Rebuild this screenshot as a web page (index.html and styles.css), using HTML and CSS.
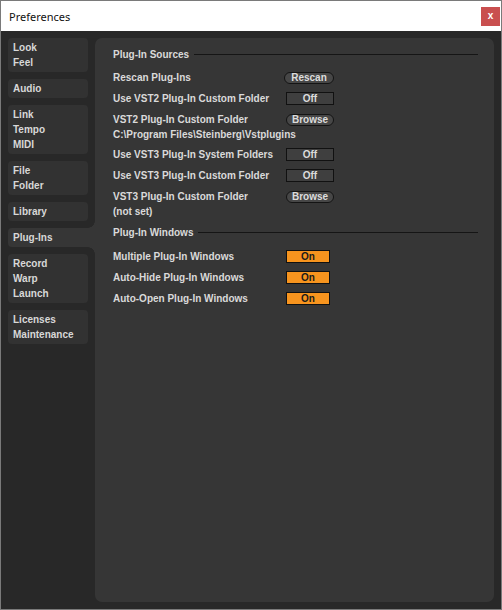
FILE: index.html
```html
<!DOCTYPE html>
<html lang="en">
<head>
    <meta charset="UTF-8">
    <title>Preferences</title>
    <link rel="stylesheet" href="styles.css">
</head>
<body>
    <div class="window">
        <div class="titlebar">
            <span class="title">Preferences</span>
            <span class="close">x</span>
        </div>

        <div class="content">
            <div class="sidebar">
                <div class="tab">Look<br>Feel</div>
                <div class="tab">Audio</div>
                <div class="tab">Link<br>Tempo<br>MIDI</div>
                <div class="tab">File<br>Folder</div>
                <div class="tab">Library</div>
                <div class="tab selected">Plug-Ins</div>
                <div class="tab">Record<br>Warp<br>Launch</div>
                <div class="tab">Licenses<br>Maintenance</div>
            </div>

            <div class="panel">
                <div class="section-head">
                    <span>Plug-In Sources</span>
                    <span class="rule"></span>
                </div>
                <div class="list">
                    <div class="row">
                        <span class="label">Rescan Plug-Ins</span>
                        <span class="control"><span class="pill wide">Rescan</span></span>
                    </div>
                    <div class="row">
                        <span class="label">Use VST2 Plug-In Custom Folder</span>
                        <span class="control"><span class="toggle">Off</span></span>
                    </div>
                    <div class="row">
                        <span class="label">VST2 Plug-In Custom Folder</span>
                        <span class="control"><span class="pill">Browse</span></span>
                    </div>
                    <div class="sub">C:\Program Files\Steinberg\Vstplugins</div>
                    <div class="row">
                        <span class="label">Use VST3 Plug-In System Folders</span>
                        <span class="control"><span class="toggle">Off</span></span>
                    </div>
                    <div class="row">
                        <span class="label">Use VST3 Plug-In Custom Folder</span>
                        <span class="control"><span class="toggle">Off</span></span>
                    </div>
                    <div class="row">
                        <span class="label">VST3 Plug-In Custom Folder</span>
                        <span class="control"><span class="pill">Browse</span></span>
                    </div>
                    <div class="sub">(not set)</div>
                </div>

                <div class="section-head second">
                    <span>Plug-In Windows</span>
                    <span class="rule"></span>
                </div>
                <div class="list windows">
                    <div class="row">
                        <span class="label">Multiple Plug-In Windows</span>
                        <span class="control"><span class="toggle on">On</span></span>
                    </div>
                    <div class="row">
                        <span class="label">Auto-Hide Plug-In Windows</span>
                        <span class="control"><span class="toggle on">On</span></span>
                    </div>
                    <div class="row">
                        <span class="label">Auto-Open Plug-In Windows</span>
                        <span class="control"><span class="toggle on">On</span></span>
                    </div>
                </div>
            </div>
        </div>
    </div>
</body>
</html>
```

FILE: styles.css
```css
html, body {
    margin: 0;
    padding: 0;
    background: #282828;
}

.window {
    width: 502px;
    height: 610px;
    box-sizing: border-box;
    border: 1px solid #7a7a7a;
    display: flex;
    flex-direction: column;
    font-family: "Liberation Sans", Arial, sans-serif;
}

.titlebar {
    height: 30px;
    flex: none;
    background: #ffffff;
    display: flex;
    align-items: center;
    padding: 0 1px 0 8px;
}

.title {
    font-family: "Noto Sans", sans-serif;
    font-size: 11px;
    color: #111;
}

.close {
    margin-left: auto;
    width: 19px;
    height: 19px;
    background: #c94f4f;
    color: #fff;
    font-weight: bold;
    font-size: 10px;
    line-height: 17px;
    text-align: center;
}

.content {
    flex: 1;
    display: flex;
    gap: 7px;
    padding: 7px;
    background: #282828;
}

/* left tabs */
.sidebar {
    width: 80px;
    flex: none;
    display: flex;
    flex-direction: column;
    gap: 7px;
}

.tab {
    background: #323232;
    border-radius: 4px;
    padding: 2px 5px;
    font-size: 10px;
    font-weight: bold;
    line-height: 15px;
    color: #d8d8d8;
}

.tab.selected {
    position: relative;
    width: 87px;
    box-sizing: border-box;
    background: #363636;
    border-radius: 4px 0 0 4px;
}

.tab.selected::before,
.tab.selected::after {
    content: "";
    position: absolute;
    left: 80px;
    width: 7px;
    height: 7px;
}

.tab.selected::before {
    top: -7px;
    background: radial-gradient(circle at 0 0, #282828 6.5px, #363636 7px);
}

.tab.selected::after {
    bottom: -7px;
    background: radial-gradient(circle at 0 100%, #282828 6.5px, #363636 7px);
}

/* main panel */
.panel {
    flex: 1;
    background: #363636;
    border-radius: 7px;
    padding: 8px 16px 0 18px;
    color: #dadada;
    font-size: 10px;
    font-weight: bold;
}

.section-head {
    height: 16px;
    display: flex;
    align-items: center;
}

.section-head.second {
    margin-top: 3px;
}

.rule {
    flex: 1;
    margin-left: 5px;
    border-top: 1px solid #151515;
}

.list {
    margin-top: 5px;
}

.list.windows {
    margin-top: 6px;
}

.row {
    height: 21px;
    display: flex;
    align-items: center;
}

.label {
    width: 171px;
}

.control {
    width: 50px;
    display: flex;
    justify-content: flex-end;
}

.sub {
    line-height: 10px;
    padding-bottom: 4px;
}

.pill {
    width: 48px;
    height: 12px;
    box-sizing: border-box;
    border: 1px solid #141414;
    border-radius: 6px;
    background: #474747;
    color: #dcdcdc;
    line-height: 10px;
    text-align: center;
}

.pill.wide {
    width: 50px;
}

.toggle {
    width: 48px;
    height: 13px;
    box-sizing: border-box;
    border: 1px solid #111;
    background: #3f3f3f;
    color: #dcdcdc;
    line-height: 11px;
    text-align: center;
}

.toggle.on {
    width: 44px;
    margin-right: 4px;
    background: #f7941e;
    color: #1a1a1a;
}
```
